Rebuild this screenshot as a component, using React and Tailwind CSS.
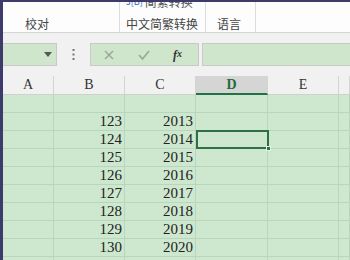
export default function App() {
  const rows = [
    ['', ''],
    ['123', '2013'],
    ['124', '2014'],
    ['125', '2015'],
    ['126', '2016'],
    ['127', '2017'],
    ['128', '2018'],
    ['129', '2019'],
    ['130', '2020'],
    ['', ''],
  ];
  const cols = ['A', 'B', 'C', 'D', 'E', ''];
  const cjk = { fontFamily: '"Noto Sans CJK SC", "Noto Sans", sans-serif' };
  const serif = { fontFamily: '"Liberation Serif", "Noto Sans CJK SC", serif' };

  return (
    <div className="w-[350px] h-[260px] overflow-hidden border-l-[3px] border-t-2 border-[#3d3b6b] bg-[#cde8cf] flex flex-col">
      {/* Ribbon */}
      <div className="h-[31px] shrink-0 bg-[#fdfdfd] border-b border-[#d6d6d6] flex text-[12px] text-[#444]" style={cjk}>
        <div className="w-[117px] flex items-end pl-[22px] border-r border-[#dcdcdc]">
          <span className="leading-[17px]">校对</span>
        </div>
        <div className="w-[86px] flex flex-col items-start pl-[6px] border-r border-[#dcdcdc]">
          <div className="h-[7px] overflow-hidden">
            <div className="flex items-center gap-[2px] -mt-[7px] h-[14px] leading-[14px]">
              <span className="text-[9px] text-[#2b6cc4]">J[B]</span>
              <span className="text-[#555]">简繁转换</span>
            </div>
          </div>
          <span className="mt-auto leading-[17px]">中文简繁转换</span>
        </div>
        <div className="w-[50px] flex items-end pl-[11px] border-r border-[#dcdcdc]">
          <span className="leading-[17px]">语言</span>
        </div>
        <div className="flex-1" />
      </div>

      {/* Formula toolbar */}
      <div className="h-[43px] shrink-0 bg-[#f1f1f1] flex items-start pt-[10px]">
        <div className="w-[54px] h-[23px] bg-[#cfe6cc] border border-[#c9c9c9] border-l-0 flex items-center justify-end pr-[4px]">
          <svg width="8" height="5" viewBox="0 0 8 5"><path d="M0 0h8L4 5z" fill="#555" /></svg>
        </div>
        <div className="w-[33px] h-[23px] flex items-center justify-center">
          <svg width="3" height="11" viewBox="0 0 3 11">
            <rect x="0.5" y="0" width="2" height="2" fill="#777" />
            <rect x="0.5" y="4.5" width="2" height="2" fill="#777" />
            <rect x="0.5" y="9" width="2" height="2" fill="#777" />
          </svg>
        </div>
        <div className="w-[109px] h-[23px] bg-[#cfe6cc] border border-[#c9c9c9] flex items-center">
          <div className="w-[36px] flex justify-center">
            <svg width="10" height="10" viewBox="0 0 10 10"><path d="M1 1l8 8M9 1l-8 8" stroke="#9aa39a" strokeWidth="1.3" /></svg>
          </div>
          <div className="w-[34px] flex justify-center">
            <svg width="12" height="10" viewBox="0 0 12 10"><path d="M1 5l3.5 4L11 1" stroke="#9aa39a" strokeWidth="1.5" fill="none" /></svg>
          </div>
          <div className="flex-1 flex justify-center text-[12px] italic font-bold text-[#333] pr-[4px]" style={serif}>
            f<span className="text-[10px]">x</span>
          </div>
        </div>
        <div className="w-[3px]" />
        <div className="flex-1 h-[23px] bg-[#cfe6cc] border border-[#c9c9c9] border-r-0" />
      </div>

      {/* Sheet */}
      <div className="relative flex-1">
        <div className="grid grid-cols-[51px_71px_71px_72px_71px_1fr]">
          {cols.map((c, i) => (
            <div
              key={'h' + i}
              className={
                'h-[19px] flex items-center justify-center text-[14px] leading-none border-r border-[#d4d4d4] ' +
                (c === 'D'
                  ? 'bg-[#d5d5d5] text-[#1f6b3a] font-bold border-b-2 border-b-[#217346]'
                  : 'bg-[#f1f1f1] text-[#333] border-b border-b-[#d0d0d0]')
              }
              style={serif}
            >
              {c}
            </div>
          ))}
          {rows.map((r, ri) =>
            cols.map((c, ci) => (
              <div
                key={ri + '-' + ci}
                className="h-[18px] border-r border-b border-[#b9d6bc] flex items-center justify-end pr-[2px] text-[15px] leading-none text-[#222]"
                style={serif}
              >
                {ci === 1 ? r[0] : ci === 2 ? r[1] : ''}
              </div>
            ))
          )}
        </div>
        {/* active cell */}
        <div className="absolute left-[193px] top-[54px] w-[73px] h-[19px] border-2 border-[#2f6f45]" />
        <div className="absolute left-[263px] top-[70px] w-[5px] h-[5px] bg-[#2f6f45] border border-[#e8f3e8]" />
      </div>
    </div>
  );
}
